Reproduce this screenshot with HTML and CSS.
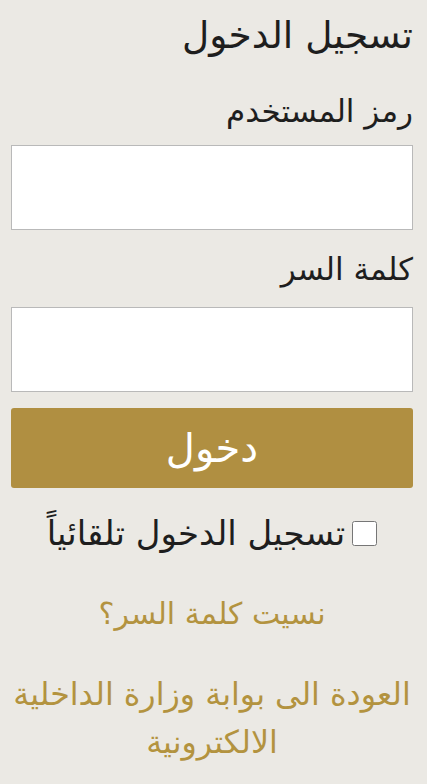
FILE: index.html
```html
<!DOCTYPE html>
<html lang="ar" dir="rtl">
<head>
<meta charset="utf-8">
<title>تسجيل الدخول</title>
<link rel="stylesheet" href="styles.css">
</head>
<body>
<main class="login">
  <h1 class="title">تسجيل الدخول</h1>
  <form class="form">
    <label class="label label-user" for="user">رمز المستخدم</label>
    <input class="field" id="user" type="text">
    <label class="label label-pass" for="pass">كلمة السر</label>
    <input class="field" id="pass" type="password">
    <button class="submit" type="button">دخول</button>
    <div class="remember">
      <input class="check" id="rem" type="checkbox">
      <label for="rem">تسجيل الدخول تلقائياً</label>
    </div>
  </form>
  <a class="link forgot" href="#">نسيت كلمة السر؟</a>
  <a class="link back" href="#">العودة الى بوابة وزارة الداخلية الالكترونية</a>
</main>
</body>
</html>
```
FILE: styles.css
```css
html, body {
  margin: 0;
  padding: 0;
  background: #ebe9e4;
}
body {
  font-family: "DejaVu Sans", sans-serif;
  color: #1e1e1e;
}
.login {
  display: flex;
  flex-direction: column;
  padding: 5px 14px 0 11px;
}
.title {
  margin: 0;
  font-size: 37.5px;
  font-weight: normal;
  line-height: 60px;
}
.form {
  display: flex;
  flex-direction: column;
}
.label {
  font-size: 31px;
  line-height: 52px;
}
.label-user {
  margin-top: 20px;
  margin-bottom: 8px;
}
.label-pass {
  margin-top: 13px;
  margin-bottom: 12px;
}
.field {
  box-sizing: border-box;
  width: 100%;
  height: 85px;
  margin: 0;
  border: 1px solid #b9b9b9;
  background: #fff;
}
.submit {
  margin-top: 16px;
  height: 80px;
  border: 0;
  border-radius: 3px;
  background: #b08f41;
  color: #fff;
  font-family: "DejaVu Sans", sans-serif;
  font-size: 40px;
  line-height: 1;
}
.remember {
  display: flex;
  justify-content: center;
  align-items: center;
  margin-top: 25px;
  height: 40px;
  font-size: 34px;
}
.check {
  width: 25px;
  height: 25px;
  margin: 0 0 0 7px;
}
.link {
  display: block;
  text-align: center;
  color: #b3933f;
  text-decoration: none;
}
.forgot {
  margin-top: 41px;
  font-size: 30px;
  line-height: 40px;
}
.back {
  margin-top: 36px;
  font-size: 31.7px;
  line-height: 48px;
}
```
